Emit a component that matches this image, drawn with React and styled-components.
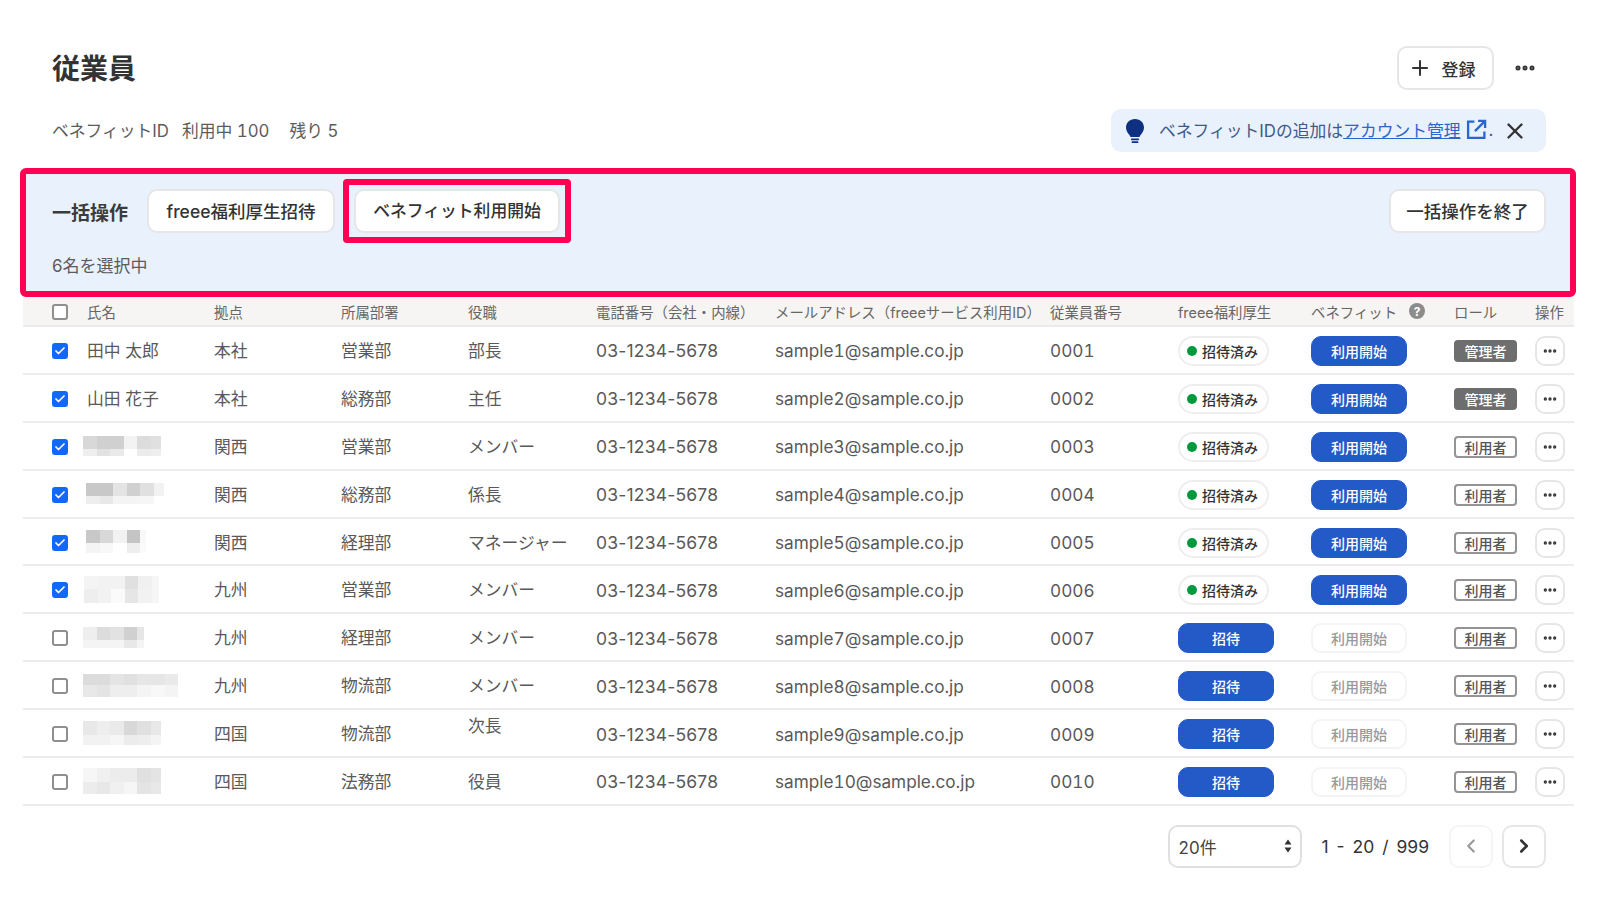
import React from "react";
import styled, { createGlobalStyle, css } from "styled-components";
import { Plus, X, Check, ChevronLeft, ChevronRight, Ellipsis } from "lucide-react";

const GlobalStyle = createGlobalStyle`
  html, body { margin: 0; padding: 0; background: #fff; }
  body {
    font-family: "Inter", "Noto Sans CJK JP", sans-serif;
    color: #333;
  }
`;

const COLUMNS = "35px 127px 127px 127px 128px 179px 275px 128px 133px 143px 81px 1fr";

const employees = [
  { name: "田中 太郎", base: "本社", dept: "営業部", title: "部長", no: 1, checked: true, invited: true, admin: true },
  { name: "山田 花子", base: "本社", dept: "総務部", title: "主任", no: 2, checked: true, invited: true, admin: true },
  {
    base: "関西", dept: "営業部", title: "メンバー", no: 3, checked: true, invited: true, shift: 0, tail: 10,
    mosaic: [[40, ["d8", "d0", "d0", "f3", "dc", "e0"]], [20, ["ee", "e2", "ea", "ff", "ec", "ee"]]],
  },
  {
    base: "関西", dept: "総務部", title: "係長", no: 4, checked: true, invited: true, shift: 3, tail: 10,
    mosaic: [[40, ["c8", "c8", "e4", "d0", "e0", "f2"]], [24, ["ee", "e8", "f4", "f4", "f6", "ff"]]],
  },
  {
    base: "関西", dept: "経理部", title: "マネージャー", no: 5, checked: true, invited: true, shift: 3, tail: 6,
    mosaic: [[40, ["c8", "d8", "f2", "c4", "f8"]], [30, ["f4", "f8", "ff", "ee", "fa"]]],
  },
  {
    base: "九州", dept: "営業部", title: "メンバー", no: 6, checked: true, invited: true, shift: 1, tail: 7,
    mosaic: [[40, ["f4", "f2", "f2", "e0", "f0", "f6"]], [40, ["ee", "f2", "fa", "e6", "f2", "f6"]]],
  },
  {
    base: "九州", dept: "経理部", title: "メンバー", no: 7, shift: 0, tail: 7,
    mosaic: [[38, ["ee", "dc", "e2", "d0", "e6"]], [24, ["f4", "f4", "f4", "e8", "f4"]]],
  },
  {
    base: "九州", dept: "物流部", title: "メンバー", no: 8, shift: 0, tail: 13.6,
    mosaic: [[34, ["dc", "dc", "e4", "e0", "e6", "e6", "ea"]], [34, ["e8", "e4", "ee", "ee", "f4", "f8", "f4"]]],
  },
  {
    base: "四国", dept: "物流部", title: "次長", raised: true, no: 9, shift: 0, tail: 10,
    mosaic: [[40, ["e8", "ee", "ea", "d8", "e0", "e8"]], [30, ["f2", "f2", "f6", "ec", "ee", "f4"]]],
  },
  {
    base: "四国", dept: "法務部", title: "役員", no: 10, shift: 0, tail: 10,
    mosaic: [[40, ["f6", "f0", "ec", "ec", "e0", "e4"]], [36, ["ec", "e8", "f0", "f6", "e4", "e8"]]],
  },
];

const Page = styled.div`
  width: 1600px;
  height: 911px;
  overflow: hidden;
  box-sizing: border-box;
  padding-top: 46px;
`;

const TitleBar = styled.header`
  display: flex;
  align-items: center;
  justify-content: space-between;
  height: 44px;
  padding: 0 64px 0 52px;
`;

const Title = styled.h1`
  margin: -2px 0 0;
  font-size: 28px;
  font-weight: 700;
  color: #333;
`;

const TitleActions = styled.div`
  display: flex;
  align-items: center;
  gap: 19px;
  margin-right: -1px;
`;

const buttonBase = css`
  display: inline-flex;
  align-items: center;
  justify-content: center;
  box-sizing: border-box;
  background: #fff;
  border: 2px solid #e6e6e6;
  border-radius: 10px;
  font-family: inherit;
  color: #333;
  cursor: pointer;
`;

const RegisterButton = styled.button`
  ${buttonBase}
  width: 97px;
  height: 44px;
  gap: 10px;
  padding: 0 8px 0 0;
  font-size: 17px;
  font-weight: 500;
`;

const MoreButton = styled.button`
  display: flex;
  padding: 0;
  border: 0;
  background: none;
  color: #333;
`;

const InfoBar = styled.div`
  display: flex;
  align-items: center;
  justify-content: space-between;
  height: 43px;
  margin-top: 19px;
  padding: 0 31px 0 52px;
`;

const Usage = styled.div`
  display: flex;
  gap: 13px;
  margin-bottom: 2px;
  font-size: 16.8px;
  font-variant-numeric: tabular-nums;
  color: #5c5c5c;
`;

const Remaining = styled.span`
  margin-left: 7px;
`;

const Notice = styled.div`
  display: flex;
  align-items: center;
  box-sizing: border-box;
  width: 435px;
  height: 43px;
  margin-right: 23px;
  padding: 0 18px 0 13px;
  background: #e9f1fd;
  border-radius: 10px;
  font-size: 16.8px;
  color: #3d5a8a;
`;

const NoticeText = styled.span`
  display: inline-flex;
  align-items: center;
  flex: 1;
  margin: 0 0 2px 13px;
`;

const NoticeLink = styled.a`
  color: #2a66cc;
  text-decoration: underline;
`;

const CloseIcon = styled(X)`
  color: #333;
`;

const BulkPanel = styled.section`
  box-sizing: border-box;
  width: 1556px;
  height: 129px;
  margin: 16px 0 0 20px;
  padding: 5px 24px 0 26px;
  background: #e9f1fd;
  border: 6px solid #ff0055;
  border-radius: 6px;
`;

const BulkRow = styled.div`
  display: flex;
  align-items: center;
`;

const BulkLabel = styled.span`
  width: 95px;
  font-size: 19px;
  font-weight: 700;
  color: #3b3b3b;
`;

const BulkButton = styled.button`
  ${buttonBase}
  height: 44px;
  width: ${(p) => p.$width}px;
  padding: 0 0 2px;
  font-size: ${(p) => p.$size || 17.5}px;
  font-weight: 500;
`;

const Highlight = styled.div`
  display: flex;
  margin-left: 8px;
  padding: 4px 5px;
  border: 6px solid #ff0055;
  border-radius: 4px;
`;

const EndButton = styled(BulkButton)`
  margin-left: auto;
`;

const SelectedCount = styled.div`
  margin-top: 11px;
  font-size: 17px;
  line-height: 24px;
  color: #5c5c5c;
`;

const Table = styled.div`
  margin: 0 26px 0 23px;
`;

const rowGrid = css`
  display: grid;
  grid-template-columns: ${COLUMNS};
  align-items: center;
  box-sizing: border-box;
  padding-left: 29px;
`;

const HeadRow = styled.div`
  ${rowGrid}
  height: 30px;
  background: #f6f5f3;
  border-bottom: 2px solid #ebebeb;
  font-size: 14.4px;
  color: #666;
`;

const HelpHead = styled.span`
  display: flex;
  align-items: center;
  gap: 12px;
`;

const HelpBadge = styled.span`
  display: flex;
  align-items: center;
  justify-content: center;
  width: 16px;
  height: 16px;
  border-radius: 50%;
  background: #8c8c8c;
  color: #fff;
  font-size: 12px;
  font-weight: 700;
`;

const BodyRow = styled.div`
  ${rowGrid}
  height: 47.9px;
  border-bottom: 2px solid #ececec;
  font-size: 16.8px;
  color: #595959;
`;

const Phone = styled.span`
  margin-top: 2px;
  font-size: 17.5px;
  letter-spacing: 0.2px;
`;

const Mail = styled.span`
  margin-top: 2px;
  font-size: 17.2px;
  font-variant-numeric: tabular-nums;
`;

const EmployeeNo = styled.span`
  margin-top: 2px;
  font-size: 17.2px;
  font-variant-numeric: tabular-nums;
`;

const Box = styled.span`
  display: flex;
  align-items: center;
  justify-content: center;
  box-sizing: border-box;
  width: 16px;
  height: 16px;
  margin-top: 2px;
  border-radius: 3px;
  border: 2px solid ${(p) => (p.$checked ? "#1268fb" : "#8f8f8f")};
  background: ${(p) => (p.$checked ? "#1268fb" : "#fff")};
  color: #fff;
`;

const TitleText = styled.span`
  ${(p) => p.$raised && "margin-bottom: 16px;"}
`;

const Mosaic = styled.div`
  display: flex;
  flex-direction: column;
  margin-left: ${(p) => p.$shift - 4}px;
`;

const MosaicLine = styled.div`
  display: flex;
  height: ${(p) => p.$height}px;
`;

const MosaicCell = styled.span`
  width: 13.6px;
  background: ${(p) => p.$shade};
  &:last-child {
    width: ${(p) => p.$tail}px;
  }
`;

const InvitedPill = styled.span`
  display: inline-flex;
  align-items: center;
  box-sizing: border-box;
  justify-self: start;
  gap: 5px;
  width: 91px;
  height: 30px;
  margin-top: 2px;
  padding-left: 7px;
  border: 2px solid #eeeeee;
  border-radius: 15px;
  font-size: 14px;
  font-weight: 500;
  color: #333;
`;

const Dot = styled.span`
  width: 10px;
  height: 10px;
  border-radius: 50%;
  background: #00993d;
`;

const ActionButton = styled.button`
  box-sizing: border-box;
  justify-self: start;
  width: 96px;
  height: 30px;
  margin-top: 2px;
  padding: 0;
  border-radius: 10px;
  font-family: inherit;
  font-size: 14px;
  font-weight: 500;
  ${(p) =>
    p.$disabled
      ? css`
          background: #fff;
          border: 2px solid #f4f4f4;
          color: #999;
        `
      : css`
          background: #2459c8;
          border: 1px solid #2459c8;
          color: #fff;
        `}
`;

const RoleTag = styled.span`
  display: flex;
  align-items: center;
  justify-content: center;
  box-sizing: border-box;
  width: 63px;
  height: 22px;
  margin-top: 2px;
  border-radius: 4px;
  font-size: 14px;
  font-weight: 500;
  border: 2px solid ${(p) => (p.$admin ? "#6e6e6e" : "#949494")};
  background: ${(p) => (p.$admin ? "#6e6e6e" : "#fff")};
  color: ${(p) => (p.$admin ? "#fff" : "#555")};
`;

const RowMenu = styled.button`
  ${buttonBase}
  width: 30px;
  height: 30px;
  margin-top: 2px;
  padding: 0;
`;

const Pager = styled.nav`
  display: flex;
  align-items: center;
  height: 43px;
  margin: 19px 54px 0 0;
  justify-content: flex-end;
`;

const PerPage = styled.div`
  display: flex;
  align-items: center;
  justify-content: space-between;
  box-sizing: border-box;
  width: 134px;
  height: 43px;
  padding: 0 8px 0 9px;
  border: 2px solid #e2dfdf;
  border-radius: 10px;
  font-size: 17px;
  color: #444;
`;

const PageCount = styled.span`
  margin: 0 20px;
  font-size: 17.5px;
  color: #333;
  word-spacing: 3px;
`;

const PageButton = styled.button`
  ${buttonBase}
  width: 44px;
  height: 43px;
  padding: 0;
  ${(p) =>
    p.$disabled &&
    css`
      border-color: #f5f5f5;
      color: #999;
    `}
  & + & {
    margin-left: 9px;
  }
`;

const Checkbox = ({ checked }) => (
  <Box $checked={checked}>{checked && <Check size={12} strokeWidth={3.5} />}</Box>
);

const Bulb = () => (
  <svg width="22" height="26" viewBox="0 0 22 26" fill="#0f2f80">
    <path d="M11 1C5.6 1 2 5 2 9.6c0 3 1.4 5 3 6.8.9 1 1.4 1.9 1.5 2.6h9c.1-.7.6-1.6 1.5-2.6 1.6-1.8 3-3.8 3-6.8C20 5 16.4 1 11 1z" />
    <rect x="7" y="20.4" width="8" height="1.8" rx=".6" />
    <rect x="7.6" y="23.2" width="6.8" height="1.9" rx=".9" />
  </svg>
);

const ExternalLink = () => (
  <svg width="21" height="21" viewBox="0 0 20 20" fill="none" stroke="#2a66cc" strokeWidth="2.2" style={{ margin: "0 2px 0 5px" }}>
    <path d="M8 2.5H2v15.5h15.5v-6M11.5 1.8h6.7v6.7M18 2 8.5 11.5" />
  </svg>
);

const SortArrows = () => (
  <svg width="8" height="14" viewBox="0 0 8 14" fill="#333">
    <path d="M4 0.5 7.5 5.5H.5zM4 13.5.5 8.5h7z" />
  </svg>
);

const Name = ({ employee }) =>
  employee.mosaic ? (
    <Mosaic $shift={employee.shift}>
      {employee.mosaic.map(([height, shades], i) => (
        <MosaicLine key={i} $height={height / 3}>
          {shades.map((shade, j) => (
            <MosaicCell key={j} $tail={employee.tail} $shade={`#${shade}${shade}${shade}`} />
          ))}
        </MosaicLine>
      ))}
    </Mosaic>
  ) : (
    <span>{employee.name}</span>
  );

export default function App() {
  return (
    <Page>
      <GlobalStyle />
      <TitleBar>
        <Title>従業員</Title>
        <TitleActions>
          <RegisterButton>
            <Plus size={24} strokeWidth={2} />
            登録
          </RegisterButton>
          <MoreButton>
            <Ellipsis size={24} strokeWidth={3} />
          </MoreButton>
        </TitleActions>
      </TitleBar>

      <InfoBar>
        <Usage>
          <span>ベネフィットID</span>
          <span>利用中 100</span>
          <Remaining>残り 5</Remaining>
        </Usage>
        <Notice>
          <Bulb />
          <NoticeText>
            ベネフィットIDの追加は<NoticeLink>アカウント管理</NoticeLink>
            <ExternalLink />.
          </NoticeText>
          <CloseIcon size={26} strokeWidth={2.2} />
        </Notice>
      </InfoBar>

      <BulkPanel>
        <BulkRow>
          <BulkLabel>一括操作</BulkLabel>
          <BulkButton $width={188}>freee福利厚生招待</BulkButton>
          <Highlight>
            <BulkButton $width={206} $size={16.8}>ベネフィット利用開始</BulkButton>
          </Highlight>
          <EndButton $width={157}>一括操作を終了</EndButton>
        </BulkRow>
        <SelectedCount>6名を選択中</SelectedCount>
      </BulkPanel>

      <Table>
        <HeadRow>
          <Checkbox />
          <span>氏名</span>
          <span>拠点</span>
          <span>所属部署</span>
          <span>役職</span>
          <span>電話番号（会社・内線）</span>
          <span>メールアドレス（freeeサービス利用ID）</span>
          <span>従業員番号</span>
          <span>freee福利厚生</span>
          <HelpHead>
            ベネフィット
            <HelpBadge>?</HelpBadge>
          </HelpHead>
          <span>ロール</span>
          <span>操作</span>
        </HeadRow>
        {employees.map((e) => (
          <BodyRow key={e.no}>
            <Checkbox checked={e.checked} />
            <Name employee={e} />
            <span>{e.base}</span>
            <span>{e.dept}</span>
            <TitleText $raised={e.raised}>{e.title}</TitleText>
            <Phone>03-1234-5678</Phone>
            <Mail>{`sample${e.no}@sample.co.jp`}</Mail>
            <EmployeeNo>{String(e.no).padStart(4, "0")}</EmployeeNo>
            {e.invited ? (
              <InvitedPill>
                <Dot />
                招待済み
              </InvitedPill>
            ) : (
              <ActionButton>招待</ActionButton>
            )}
            <ActionButton $disabled={!e.invited}>利用開始</ActionButton>
            <RoleTag $admin={e.admin}>{e.admin ? "管理者" : "利用者"}</RoleTag>
            <RowMenu>
              <Ellipsis size={16} strokeWidth={3} />
            </RowMenu>
          </BodyRow>
        ))}
      </Table>

      <Pager>
        <PerPage>
          20件
          <SortArrows />
        </PerPage>
        <PageCount>1 - 20 / 999</PageCount>
        <PageButton $disabled>
          <ChevronLeft size={22} strokeWidth={2.4} />
        </PageButton>
        <PageButton>
          <ChevronRight size={22} strokeWidth={2.8} />
        </PageButton>
      </Pager>
    </Page>
  );
}
